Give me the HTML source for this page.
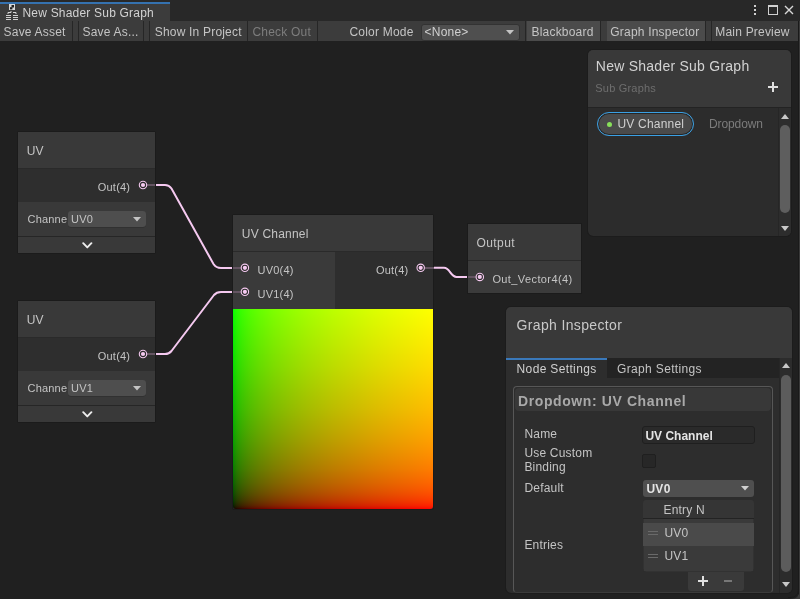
<!DOCTYPE html>
<html><head><meta charset="utf-8">
<style>
*{box-sizing:border-box;margin:0;padding:0}
html,body{width:800px;height:599px;overflow:hidden;background:#202020}
body{position:relative;font-family:"Liberation Sans",sans-serif;color:#c4c4c4}
.a{position:absolute}
.t{position:absolute;white-space:nowrap;line-height:1;font-family:"Liberation Sans",sans-serif}
.s12{font-size:12px;letter-spacing:0.2px}
.s11{font-size:11px;letter-spacing:0.2px}
.s14{font-size:14px;letter-spacing:0.25px}
.sep{position:absolute;top:21px;width:1px;height:20px;background:#262626}
.node{position:absolute;background:#2e2e2e;outline:1px solid #1b1b1b;border-radius:1px}
.ntitle{position:absolute;left:0;right:0;top:0;height:36px;background:#393939}
.port{position:absolute;width:9px;height:9px;border-radius:50%;border:1px solid #f5c9f0;background:#2e2e2e}
.port::after{content:"";position:absolute;left:1.5px;top:1.5px;width:4px;height:4px;border-radius:50%;background:#f5c9f0}
.stub{position:absolute;height:2px;background:#645462}
</style></head><body>

<!-- dock strip -->
<div class="a" style="left:0;top:0;width:800px;height:21px;background:#282828"></div>
<!-- tab -->
<div class="a" style="left:0;top:2px;width:170px;height:19px;background:#3c3c3c;border-top:2px solid #3572b0"></div>
<svg class="a" style="left:5px;top:4px" width="14" height="17" viewBox="0 0 14 17">
  <rect x="4" y="0" width="6" height="6" fill="#d8d8d8"/>
  <rect x="6.5" y="1" width="2.5" height="2.5" fill="#222"/><rect x="5" y="3.2" width="2.4" height="2.2" fill="#222"/>
  <path d="M3 10 V8.5 H6 V7 M11 10 V8.5 H8" stroke="#d8d8d8" stroke-width="1" fill="none"/>
  <path d="M1 11.5H6M1 13.5H6M1 15.5H6M8 11.5H13M8 13.5H13M8 15.5H13" stroke="#d0d0d0" stroke-width="1"/>
</svg>
<div class="t s12" style="left:22.5px;top:6.5px;color:#d2d2d2">New Shader Sub Graph</div>
<!-- window icons -->
<div class="a" style="left:754px;top:5px;width:2px;height:2px;background:#d0d0d0"></div>
<div class="a" style="left:754px;top:9px;width:2px;height:2px;background:#d0d0d0"></div>
<div class="a" style="left:754px;top:13px;width:2px;height:2px;background:#d0d0d0"></div>
<div class="a" style="left:768px;top:5px;width:10px;height:10px;border:1px solid #d0d0d0;border-top-width:2px"></div>
<svg class="a" style="left:784px;top:5px" width="10" height="10"><path d="M1 1L9 9M9 1L1 9" stroke="#d8d8d8" stroke-width="1.4"/></svg>

<!-- toolbar -->
<div class="a" style="left:0;top:21px;width:798px;height:20px;background:#3c3c3c"></div>
<div class="t s12" style="left:3.6px;top:25.5px">Save Asset</div>
<div class="sep" style="left:72px"></div>
<div class="sep" style="left:78px"></div>
<div class="t s12" style="left:82.5px;top:25.5px">Save As...</div>
<div class="sep" style="left:143px"></div>
<div class="sep" style="left:149px"></div>
<div class="t s12" style="left:154.7px;top:25.5px">Show In Project</div>
<div class="sep" style="left:247px"></div>
<div class="t s12" style="left:252.5px;top:25.5px;color:#7d7d7d">Check Out</div>
<div class="sep" style="left:317px"></div>
<div class="t s12" style="left:349.5px;top:25.5px">Color Mode</div>
<div class="a" style="left:420.5px;top:23.5px;width:99px;height:17px;background:#4f4f4f;border-radius:3px;border:1px solid #333"></div>
<div class="t s12" style="left:424.6px;top:25.5px;color:#d0d0d0">&lt;None&gt;</div>
<svg class="a" style="left:506px;top:30px" width="9" height="5"><path d="M0 0H8L4 4.5Z" fill="#c4c4c4"/></svg>
<div class="sep" style="left:525px"></div>
<div class="a" style="left:527px;top:21px;width:73px;height:20px;background:#4b4b4b"></div>
<div class="sep" style="left:600px"></div>
<div class="t s12" style="left:531.5px;top:25.5px">Blackboard</div>
<div class="a" style="left:607px;top:21px;width:98px;height:20px;background:#4b4b4b"></div>
<div class="sep" style="left:705px"></div>
<div class="sep" style="left:711px"></div>
<div class="t s12" style="left:610.3px;top:25.5px">Graph Inspector</div>
<div class="t s12" style="left:715.3px;top:25.5px">Main Preview</div>

<!-- wires -->
<svg class="a" style="left:0;top:0" width="800" height="599">
  <g fill="none" stroke="#f5c9f0" stroke-width="2" stroke-linecap="round">
    <path d="M155 185H165Q169 185 171.5 188.5L213.5 264Q216 268 221 268H233"/>
    <path d="M155 354H165Q169 354 171.5 351L214 295Q216.5 292 221 292H233"/>
    <path d="M433.5 267.8H444C450 267.8 450.5 276.9 456.5 276.9H468"/>
  </g>
</svg>

<!-- UV node 1 -->
<div class="node" style="left:18px;top:132px;width:137px;height:121px">
  <div class="ntitle"></div>
  <div class="t s12" style="left:8.7px;top:12.5px">UV</div>
  <div class="a" style="left:0;top:36px;width:137px;height:34px;background:#2e2e2e"></div>
  <div class="a" style="left:0;top:36px;width:137px;height:1px;background:#2a2a2a"></div>
  <div class="t s11" style="left:79.8px;top:50px">Out(4)</div>
  <div class="a" style="left:0;top:70px;width:137px;height:34px;background:#393939"></div>
  <div class="t s11" style="left:9.5px;top:81.5px">Channe</div>
  <div class="a" style="left:50px;top:79px;width:78px;height:16px;background:#4e4e4e;border-radius:3px;box-shadow:0 0.5px 0 #2a2a2a"></div>
  <div class="t s11" style="left:53px;top:81.5px">UV0</div>
  <svg class="a" style="left:115px;top:84.5px" width="9" height="5"><path d="M0 0H8L4 4.5Z" fill="#c4c4c4"/></svg>
  <div class="a" style="left:0;top:104px;width:137px;height:1px;background:#262626"></div>
  <div class="a" style="left:0;top:105px;width:137px;height:16px;background:#393939"></div>
  <svg class="a" style="left:63.5px;top:109.7px" width="11" height="8"><path d="M1.2 1.2L5.3 5.4L9.4 1.2" stroke="#ececec" stroke-width="1.9" fill="none" stroke-linecap="round" stroke-linejoin="round"/></svg>
</div>
<div class="stub" style="left:147px;top:184px;width:8px"></div>

<!-- UV node 2 -->
<div class="node" style="left:18px;top:301px;width:137px;height:121px">
  <div class="ntitle"></div>
  <div class="t s12" style="left:8.7px;top:12.5px">UV</div>
  <div class="a" style="left:0;top:36px;width:137px;height:34px;background:#2e2e2e"></div>
  <div class="a" style="left:0;top:36px;width:137px;height:1px;background:#2a2a2a"></div>
  <div class="t s11" style="left:79.8px;top:50px">Out(4)</div>
  <div class="a" style="left:0;top:70px;width:137px;height:34px;background:#393939"></div>
  <div class="t s11" style="left:9.5px;top:81.5px">Channe</div>
  <div class="a" style="left:50px;top:79px;width:78px;height:16px;background:#4e4e4e;border-radius:3px;box-shadow:0 0.5px 0 #2a2a2a"></div>
  <div class="t s11" style="left:53px;top:81.5px">UV1</div>
  <svg class="a" style="left:115px;top:84.5px" width="9" height="5"><path d="M0 0H8L4 4.5Z" fill="#c4c4c4"/></svg>
  <div class="a" style="left:0;top:104px;width:137px;height:1px;background:#262626"></div>
  <div class="a" style="left:0;top:105px;width:137px;height:16px;background:#393939"></div>
  <svg class="a" style="left:63.5px;top:109.7px" width="11" height="8"><path d="M1.2 1.2L5.3 5.4L9.4 1.2" stroke="#ececec" stroke-width="1.9" fill="none" stroke-linecap="round" stroke-linejoin="round"/></svg>
</div>
<div class="stub" style="left:147px;top:353px;width:8px"></div>

<!-- UV Channel node -->
<div class="node" style="left:233px;top:215px;width:200px;height:294px">
  <div class="ntitle"></div>
  <div class="t s12" style="left:8.8px;top:12.5px">UV Channel</div>
  <div class="a" style="left:0;top:36px;width:102px;height:58px;background:#3a3a3a"></div>
  <div class="a" style="left:102px;top:36px;width:98px;height:58px;background:#2e2e2e"></div>
  <div class="a" style="left:0;top:36px;width:200px;height:1px;background:#2a2a2a"></div>
  <div class="t s11" style="left:24.6px;top:49.5px">UV0(4)</div>
  <div class="t s11" style="left:24.6px;top:73.5px">UV1(4)</div>
  <div class="t s11" style="left:143px;top:49.5px">Out(4)</div>
  <div class="a" style="left:0;top:94px;width:200px;height:200px;overflow:hidden;border-radius:0 0 3px 3px;background:linear-gradient(to right,#000000 0%,#080000 0.25%,#100000 0.5%,#190000 1%,#270000 2%,#300000 3%,#3c0000 4.5%,#450000 6%,#500000 8%,#590000 10%,#650000 13%,#6f0000 16%,#7c0000 20%,#890000 25%,#950000 30%,#a00000 35%,#aa0000 40%,#bc0000 50%,#cb0000 60%,#da0000 70%,#e70000 80%,#f30000 90%,#ff0000 100%)">
    <div class="a" style="left:0;top:0;width:200px;height:200px;mix-blend-mode:screen;background:linear-gradient(to top,#000000 0%,#000800 0.25%,#001000 0.5%,#001900 1%,#002700 2%,#003000 3%,#003c00 4.5%,#004500 6%,#005000 8%,#005900 10%,#006500 13%,#006f00 16%,#007c00 20%,#008900 25%,#009500 30%,#00a000 35%,#00aa00 40%,#00bc00 50%,#00cb00 60%,#00da00 70%,#00e700 80%,#00f300 90%,#00ff00 100%)"></div>
  </div>
</div>
<div class="stub" style="left:233px;top:266.8px;width:8px"></div>
<div class="stub" style="left:233px;top:290.8px;width:8px"></div>
<div class="stub" style="left:425px;top:266.8px;width:8.5px"></div>

<!-- Output node -->
<div class="node" style="left:468px;top:224px;width:113px;height:69px;background:#3b3b3b;border-radius:0">
  <div class="ntitle"></div>
  <div class="a" style="left:0;top:36px;width:113px;height:1px;background:#2a2a2a"></div>
  <div class="t s12" style="left:8.4px;top:12.5px;letter-spacing:0.45px">Output</div>
  <div class="t s11" style="left:24.4px;top:50px;letter-spacing:0.4px">Out_Vector4(4)</div>
</div>
<div class="stub" style="left:468px;top:275.9px;width:8px"></div>

<!-- ports -->
<svg class="a" style="left:0;top:0" width="800" height="599">
  <circle cx="143" cy="185" r="3.7" fill="#2a2a2a" stroke="#f5c9f0" stroke-width="1.1"/><circle cx="143" cy="185" r="2.1" fill="#f5c9f0"/>
  <circle cx="143" cy="354" r="3.7" fill="#2a2a2a" stroke="#f5c9f0" stroke-width="1.1"/><circle cx="143" cy="354" r="2.1" fill="#f5c9f0"/>
  <circle cx="244.9" cy="267.8" r="3.7" fill="#2c2c2c" stroke="#f5c9f0" stroke-width="1.1"/><circle cx="244.9" cy="267.8" r="2.1" fill="#f5c9f0"/>
  <circle cx="244.9" cy="291.8" r="3.7" fill="#2c2c2c" stroke="#f5c9f0" stroke-width="1.1"/><circle cx="244.9" cy="291.8" r="2.1" fill="#f5c9f0"/>
  <circle cx="420.7" cy="267.8" r="3.7" fill="#2a2a2a" stroke="#f5c9f0" stroke-width="1.1"/><circle cx="420.7" cy="267.8" r="2.1" fill="#f5c9f0"/>
  <circle cx="479.8" cy="276.9" r="3.7" fill="#2c2c2c" stroke="#f5c9f0" stroke-width="1.1"/><circle cx="479.8" cy="276.9" r="2.1" fill="#f5c9f0"/>
</svg>

<!-- Blackboard -->
<div class="a" style="left:588px;top:50px;width:203px;height:186px;background:#2c2c2c;border-radius:5px;overflow:hidden;outline:1px solid #1c1c1c">
  <div class="a" style="left:0;top:0;width:203px;height:57px;background:#393939"></div>
  <div class="a" style="left:0;top:57px;width:203px;height:1px;background:#232323"></div>
  <div class="a" style="left:190px;top:58px;width:13px;height:128px;background:#2d2d2d;border-left:1px solid #262626"></div>
  <svg class="a" style="left:193px;top:63.5px" width="8" height="6"><path d="M0 5H8L4 0Z" fill="#c8c8c8"/></svg>
  <div class="a" style="left:192px;top:75px;width:10px;height:88px;background:#5e5e5e;border-radius:5px"></div>
  <svg class="a" style="left:193px;top:175.5px" width="8" height="6"><path d="M0 0H8L4 5Z" fill="#c8c8c8"/></svg>
</div>
<div class="t s14" style="left:595.8px;top:58.8px;color:#d2d2d2">New Shader Sub Graph</div>
<div class="t s11" style="left:595.3px;top:82.5px;color:#6e6e6e">Sub Graphs</div>
<div class="a" style="left:768px;top:85.6px;width:10px;height:2px;background:#e0e0e0"></div>
<div class="a" style="left:772px;top:81.6px;width:2px;height:10px;background:#e0e0e0"></div>
<div class="a" style="left:597px;top:112px;width:97px;height:24px;border-radius:12px;border:1.8px solid #3aa0e4;background:#4a4a4a;box-shadow:inset 0 0 0 1px #262626"></div>
<div class="a" style="left:607.3px;top:121.8px;width:5px;height:5px;border-radius:50%;background:#88e05a"></div>
<div class="t s12" style="left:617.5px;top:117.5px;color:#d0d0d0">UV Channel</div>
<div class="t s12" style="left:709px;top:118.1px;color:#7c7c7c;letter-spacing:-0.1px">Dropdown</div>

<!-- Graph Inspector -->
<div class="a" style="left:506px;top:307px;width:286px;height:286px;background:#2d2d2d;border-radius:5px;overflow:hidden;outline:1px solid #1c1c1c">
  <div class="a" style="left:0;top:0;width:287px;height:51px;background:#393939"></div>
  <div class="a" style="left:0;top:51px;width:101px;height:2px;background:#3a79bb"></div>
  <div class="a" style="left:101px;top:51px;width:172.5px;height:19.5px;background:#232323"></div>
  <div class="a" style="left:273px;top:51px;width:13px;height:235px;background:#2c2c2c;border-left:1px solid #262626"></div>
  <svg class="a" style="left:276px;top:56px" width="8" height="6"><path d="M0 5H8L4 0Z" fill="#c8c8c8"/></svg>
  <div class="a" style="left:275px;top:68px;width:10px;height:197px;background:#5c5c5c;border-radius:5px"></div>
  <svg class="a" style="left:276px;top:275.2px" width="8" height="6"><path d="M0 0H8L4 5Z" fill="#c8c8c8"/></svg>
</div>
<div class="t s14" style="left:516.6px;top:318.2px;color:#c8c8c8;letter-spacing:0.35px">Graph Inspector</div>
<div class="t s12" style="left:516.6px;top:362.8px;color:#d0d0d0;letter-spacing:0.35px">Node Settings</div>
<div class="t s12" style="left:617px;top:362.8px;color:#c4c4c4;letter-spacing:0.35px">Graph Settings</div>

<!-- inspector box -->
<div class="a" style="left:513px;top:386px;width:260px;height:207px;border:1px solid #575757;border-bottom-color:#3a3a3a;border-radius:4px;background:#2d2d2d"></div>
<div class="a" style="left:515px;top:388px;width:255.5px;height:22.5px;background:#383838;border-radius:4px"></div>
<div class="t" style="left:518px;top:394.2px;font-size:14px;font-weight:bold;color:#a9a9a9;letter-spacing:0.6px">Dropdown: UV Channel</div>
<div class="t s12" style="left:524.4px;top:427.8px">Name</div>
<div class="t s12" style="left:524.4px;top:447.2px">Use Custom</div>
<div class="t s12" style="left:524.4px;top:460.8px">Binding</div>
<div class="t s12" style="left:524.4px;top:481.7px">Default</div>
<div class="t s12" style="left:524.4px;top:539.1px">Entries</div>

<div class="a" style="left:642px;top:426px;width:112.5px;height:17.5px;background:#2a2a2a;border:1px solid #1f1f1f;border-radius:3px"></div>
<div class="t" style="left:645.4px;top:430px;font-size:12px;font-weight:bold;color:#e4e4e4;letter-spacing:0">UV Channel</div>
<div class="a" style="left:642px;top:454px;width:14px;height:14px;background:#272727;border:1px solid #1f1f1f;border-radius:2px"></div>
<div class="a" style="left:642.5px;top:480px;width:111.5px;height:17px;background:#4f4f4f;border-radius:3px"></div>
<div class="t" style="left:646.4px;top:483px;font-size:12px;font-weight:bold;color:#e4e4e4;letter-spacing:0.3px">UV0</div>
<svg class="a" style="left:740.5px;top:485.5px" width="9" height="5"><path d="M0 0H8L4 4.5Z" fill="#d0d0d0"/></svg>

<div class="a" style="left:642.5px;top:500px;width:111.5px;height:72px;background:#3a3a3a;border-radius:3px;overflow:hidden;box-shadow:inset 0 0 0 0.5px #2a2a2a">
  <div class="a" style="left:0;top:0;width:111px;height:18.5px;background:#353535;border-bottom:1px solid #232323"></div>
  <div class="a" style="left:0;top:23px;width:111px;height:23px;background:#4a4a4a"></div>
</div>
<div class="t s12" style="left:663.5px;top:504.1px">Entry N</div>
<div class="a" style="left:648px;top:530.5px;width:10px;height:1px;background:#6a6a6a"></div>
<div class="a" style="left:648px;top:534px;width:10px;height:1px;background:#6a6a6a"></div>
<div class="t s12" style="left:664.4px;top:526.9px">UV0</div>
<div class="a" style="left:648px;top:553.5px;width:10px;height:1px;background:#6a6a6a"></div>
<div class="a" style="left:648px;top:557px;width:10px;height:1px;background:#6a6a6a"></div>
<div class="t s12" style="left:664.4px;top:549.7px">UV1</div>
<div class="a" style="left:688px;top:571.5px;width:56px;height:19px;background:#3a3a3a;border-radius:0 0 3px 3px"></div>
<div class="a" style="left:698px;top:580px;width:10px;height:2px;background:#e0e0e0"></div>
<div class="a" style="left:702px;top:576px;width:2px;height:10px;background:#e0e0e0"></div>
<div class="a" style="left:724px;top:580px;width:8px;height:2px;background:#777"></div>

<div class="a" style="left:798px;top:21px;width:1px;height:578px;background:#1a1a1a"></div>
<div class="a" style="left:799px;top:21px;width:1px;height:578px;background:#393939"></div>
<svg class="a" style="left:788px;top:587px" width="12" height="12"><path d="M12 0V2Q12 12 2 12H0V12H12Z" fill="#393939"/><path d="M10.5 0V2Q10.5 10.5 2 10.5H0" stroke="#1a1a1a" stroke-width="1" fill="none"/></svg>
</body></html>
